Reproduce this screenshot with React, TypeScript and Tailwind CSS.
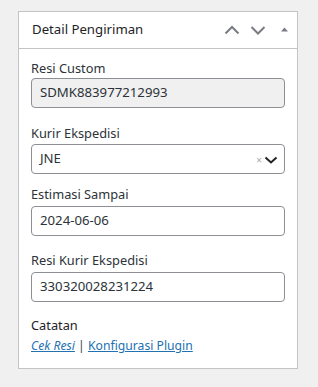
import React from "react";

const font = { fontFamily: '"Noto Sans", "Open Sans", sans-serif' };

function Field({ label, children, top }: { label: string; children: React.ReactNode; top: string }) {
  return (
    <div className={top}>
      <div className="text-[12.8px] leading-[18px] text-[#2c3338]">{label}</div>
      {children}
    </div>
  );
}

export default function App() {
  return (
    <div className="min-h-screen bg-[#f0f0f1] pt-[11px] pl-[18px]" style={font}>
      <div className="w-[280px] border border-[#c3c4c7] bg-white">
        <div className="flex h-[37px] items-center justify-between border-b border-[#c3c4c7] pl-[13px] pr-[6px]">
          <span className="text-[13.2px] text-[#1d2327]">Detail Pengiriman</span>
          <div className="flex items-center">
            <svg width="26" height="26" viewBox="0 0 26 26" className="text-[#787c82]">
              <path d="M6.5 16.5 L13 10 L19.5 16.5" fill="none" stroke="currentColor" strokeWidth="2" />
            </svg>
            <svg width="26" height="26" viewBox="0 0 26 26" className="text-[#787c82]">
              <path d="M6.5 10 L13 16.5 L19.5 10" fill="none" stroke="currentColor" strokeWidth="2" />
            </svg>
            <svg width="20" height="26" viewBox="0 0 20 26" className="text-[#787c82]">
              <path d="M10 14.5 L13.5 10.5 L17 14.5 Z" fill="currentColor" />
            </svg>
          </div>
        </div>
        <div className="px-[12px] pt-[10px] pb-[13px]">
          <Field label="Resi Custom" top="">
            <div className="mt-[1px] flex h-[30px] items-center rounded-[4px] border border-[#8c8f94] bg-[#f0f0f1] px-[8px] text-[13.2px] text-[#2c3338]">
              SDMK883977212993
            </div>
          </Field>
          <Field label="Kurir Ekspedisi" top="mt-[16px]">
            <div className="mt-[2px] flex h-[30px] items-center justify-between rounded-[4px] border border-[#8c8f94] bg-white pl-[8px] pr-[6px] text-[13.2px] text-[#2c3338]">
              <span>JNE</span>
              <span className="flex items-center">
                <span className="mt-[2px] text-[10px] leading-none text-[#a7aaad]">×</span>
                <svg width="14" height="14" viewBox="0 0 14 14" className="ml-[2px]">
                  <path d="M1.5 5.5 L7 10.5 L12.5 5.5" fill="none" stroke="#1d2327" strokeWidth="2" />
                </svg>
              </span>
            </div>
          </Field>
          <Field label="Estimasi Sampai" top="mt-[11px]">
            <div className="mt-[3px] flex h-[30px] items-center rounded-[4px] border border-[#8c8f94] bg-white px-[8px] text-[13.2px] text-[#2c3338]">
              2024-06-06
            </div>
          </Field>
          <Field label="Resi Kurir Ekspedisi" top="mt-[15px]">
            <div className="mt-[3px] flex h-[30px] items-center rounded-[4px] border border-[#8c8f94] bg-white px-[8px] text-[13.2px] text-[#2c3338]">
              330320028231224
            </div>
          </Field>
          <div className="mt-[14px] text-[12.8px] leading-[18px] text-[#1d2327]">Catatan</div>
          <div className="mt-[3px] text-[12.2px] leading-[18px] text-[#3c434a]">
            <a className="italic text-[#2271b1] underline" href="#">Cek Resi</a>
            {" | "}
            <a className="text-[#2271b1] underline" href="#">Konfigurasi Plugin</a>
          </div>
        </div>
      </div>
    </div>
  );
}
